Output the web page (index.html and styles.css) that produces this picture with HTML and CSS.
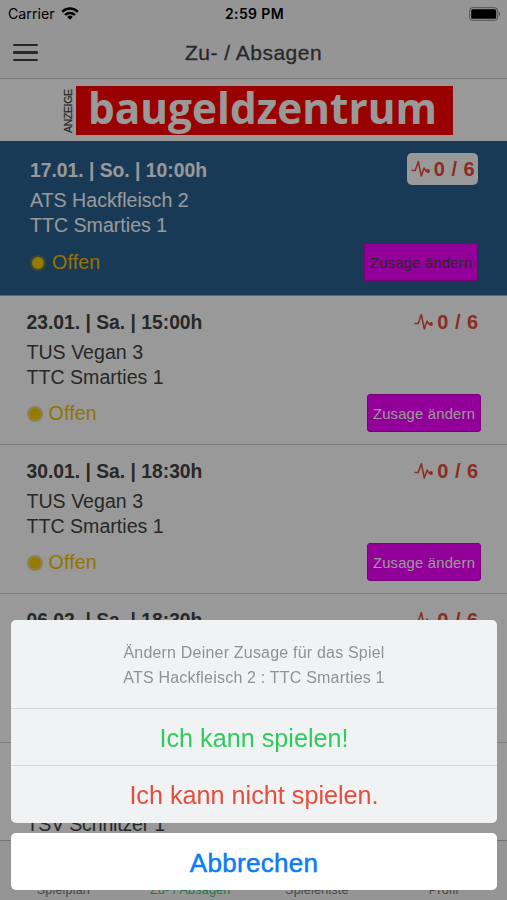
FILE: index.html
```html
<!DOCTYPE html>
<html lang="de">
<head>
<meta charset="utf-8">
<title>Zu- / Absagen</title>
<link rel="stylesheet" href="styles.css">
</head>
<body>
<svg class="defs" width="0" height="0"><symbol id="pulse" viewBox="0 0 20 20"><path d="M1 11.5h3.2L7.3 2.5l3 14.5 2.8-8 1.6 2.8H17" fill="none" stroke="currentColor" stroke-width="1.5" stroke-linejoin="round" stroke-linecap="round"/><circle cx="17" cy="12" r="1.9" fill="currentColor"/></symbol></svg>
<div class="app">
  <div class="status">
    <div class="carrier"><span>Carrier</span>
      <svg width="18" height="13" viewBox="0 0 18 13"><g fill="none" stroke="#000" stroke-width="2.4"><path d="M1.2 4.8a11 11 0 0 1 15.6 0"/><path d="M4.1 8a6.9 6.9 0 0 1 9.8 0"/></g><path d="M9 12.8L6.2 9.9a4 4 0 0 1 5.6 0z"/></svg>
    </div>
    <div class="clock">2:59 PM</div>
    <div class="battery"><svg width="32" height="14" viewBox="0 0 32 14"><rect x=".7" y=".7" width="28" height="12.6" rx="3" fill="none" stroke="#000" stroke-opacity=".45"/><rect x="2.2" y="2.2" width="25" height="9.6" rx="1.6"/><path d="M30 4.6q2 2.4 0 4.8z" opacity=".5"/></svg></div>
  </div>
  <header class="nav">
    <div class="burger"><i></i><i></i><i></i></div>
    <h1>Zu- / Absagen</h1>
  </header>
  <div class="ad"><span class="ad-label">ANZEIGE</span><div class="banner"><span>baugeldzentrum</span></div></div>
  <main>
    <section class="game next">
      <div class="top"><b class="date">17.01. | So. | 10:00h</b><b class="count"><svg width="20" height="20"><use href="#pulse"/></svg><span>0 / 6</span></b></div>
      <p>ATS Hackfleisch 2</p><p>TTC Smarties 1</p>
      <div class="bottom"><div class="open"><i></i><span>Offen</span></div><button><span>Zusage ändern</span></button></div>
    </section>
    <section class="game">
      <div class="top"><b class="date">23.01. | Sa. | 15:00h</b><b class="count"><svg width="20" height="20"><use href="#pulse"/></svg><span>0 / 6</span></b></div>
      <p>TUS Vegan 3</p><p>TTC Smarties 1</p>
      <div class="bottom"><div class="open"><i></i><span>Offen</span></div><button><span>Zusage ändern</span></button></div>
    </section>
    <section class="game">
      <div class="top"><b class="date">30.01. | Sa. | 18:30h</b><b class="count"><svg width="20" height="20"><use href="#pulse"/></svg><span>0 / 6</span></b></div>
      <p>TUS Vegan 3</p><p>TTC Smarties 1</p>
      <div class="bottom"><div class="open"><i></i><span>Offen</span></div><button><span>Zusage ändern</span></button></div>
    </section>
    <section class="game">
      <div class="top"><b class="date">06.02. | Sa. | 18:30h</b><b class="count"><svg width="20" height="20"><use href="#pulse"/></svg><span>0 / 6</span></b></div>
    </section>
    <section class="game last">
      <p>TSV Schnitzer 1</p>
    </section>
  </main>
  <nav class="tabs"><span>Spielplan</span><span class="active">Zu- / Absagen</span><span>Spielerliste</span><span>Profil</span></nav>
</div>
<div class="overlay">
  <div class="sheet">
    <div class="message"><div>Ändern Deiner Zusage für das Spiel</div><div>ATS Hackfleisch 2 : TTC Smarties 1</div></div>
    <div class="choice yes"><span>Ich kann spielen!</span></div>
    <div class="choice no"><span>Ich kann nicht spielen.</span></div>
  </div>
  <div class="cancel"><span>Abbrechen</span></div>
</div>
</body>
</html>
```
FILE: styles.css
```css
* { box-sizing: border-box; }
html, body { margin: 0; height: 900px; overflow: hidden; }
body { font-family: "Liberation Sans", Arial, sans-serif; color: #444; background: #fff; }
h1, p { margin: 0; font-weight: 400; }
.defs { position: absolute; }
.app { width: 507px; height: 900px; display: flex; flex-direction: column; overflow: hidden; }
.status { flex: none; height: 27px; background: #f8f8f8; display: grid; grid-template-columns: 1fr auto 1fr; align-items: center; padding: 0 6px 0 8px; color: #000; font-family: Inter, sans-serif; }
.carrier { display: flex; align-items: center; gap: 6px; font-size: 14.2px; }
.clock { font-size: 14px; font-weight: 600; letter-spacing: .4px; }
.battery { display: flex; justify-content: flex-end; }
.nav { flex: none; height: 52px; background: #f8f8f8; border-bottom: 1px solid #ccc; display: grid; grid-template-columns: 1fr auto 1fr; align-items: center; padding: 0 13px; }
.burger { width: 25px; display: flex; flex-direction: column; gap: 5px; }
.burger i { height: 2.5px; border-radius: 1px; background: #444; }
.nav h1 { font-size: 21px; letter-spacing: .5px; -webkit-text-stroke: .3px #444; }
.ad { flex: none; height: 62px; display: flex; padding: 7px 0 0 62px; gap: 2px; }
.ad-label { width: 12px; height: 49px; writing-mode: vertical-rl; transform: rotate(180deg); font-size: 10.5px; line-height: 12px; text-align: center; letter-spacing: -.35px; color: #444; padding-bottom: 2px; -webkit-text-stroke: .2px #444; }
.banner { width: 377px; height: 49px; background: #f00; color: #fff; font: 700 42.3px/43px "Open Sans", sans-serif; padding-left: 12px; white-space: nowrap; }
.game { height: 149px; padding: 12px 26px 0 26.5px; border-bottom: 1px solid #d0d0d0; font-size: 19.6px; }
.game.next { height: 155px; background: #2b6291; color: #fff; padding: 12px 29px 0 30px; border-bottom: 1px solid #88b4d8; }
.top { height: 32px; display: flex; justify-content: space-between; align-items: flex-start; }
.next .top { height: 35px; }
.date { font-size: 19.3px; line-height: 29px; }
.next .date { line-height: 35px; }
.count { display: flex; align-items: center; gap: 3px; height: 28px; color: #e74c3c; font-size: 20px; letter-spacing: .45px; padding-right: 2.5px; }
.next .count { height: 32px; background: #fff; border-radius: 5px; padding: 0 3px 0 4px; }
.game p { height: 24.5px; line-height: 24.5px; }
.bottom { display: flex; justify-content: space-between; align-items: center; height: 38px; margin-top: 5px; }
.next .bottom { margin-top: 6px; }
.open { display: flex; align-items: center; gap: 6px; color: #f5c000; letter-spacing: .15px; padding-top: 1px; }
.open i { width: 16px; height: 16px; border-radius: 50%; background: #fc0; border: 2px solid rgba(190, 155, 0, .4); background-clip: padding-box; }
button { width: 114px; height: 38px; padding: 1px 0 0; border: 1px solid #c800d0; border-radius: 3px; background: #f500ff; color: #fff; font: 400 14.8px "Liberation Sans", Arial, sans-serif; letter-spacing: .2px; white-space: nowrap; }
.next button { color: #444; border-radius: 0; }
.game.last { padding-top: 69px; letter-spacing: -.2px; }
main { flex: 1; min-height: 0; overflow: hidden; }
.tabs { flex: none; height: 60px; background: #f8f8f8; border-top: 1px solid #c4c4c4; display: grid; grid-template-columns: repeat(4, 1fr); align-items: end; padding-bottom: 3px; text-align: center; font-size: 12.5px; line-height: 14px; letter-spacing: .2px; color: #777; }
.active { color: #2ecc71; }
.overlay { position: fixed; inset: 0; background: rgba(0, 0, 0, .4); padding: 620px 10px 10px 11px; display: flex; flex-direction: column; gap: 10px; }
.sheet { height: 203px; border-radius: 5px; background: #f0f2f4; overflow: hidden; text-align: center; }
.message { height: 89px; padding-top: 21px; color: #919191; font-size: 16px; letter-spacing: .2px; line-height: 24.5px; border-bottom: 1px solid #d2d4d6; }
.choice { height: 57px; line-height: 58px; font-size: 25.2px; }
.yes { color: #2ecc5c; border-bottom: 1px solid #d2d4d6; }
.no { color: #e74c3c; }
.cancel { height: 57px; line-height: 60px; border-radius: 5px; background: #fff; text-align: center; font-size: 26px; letter-spacing: .3px; color: #0a7cf5; -webkit-text-stroke: .5px #0a7cf5; }
```
